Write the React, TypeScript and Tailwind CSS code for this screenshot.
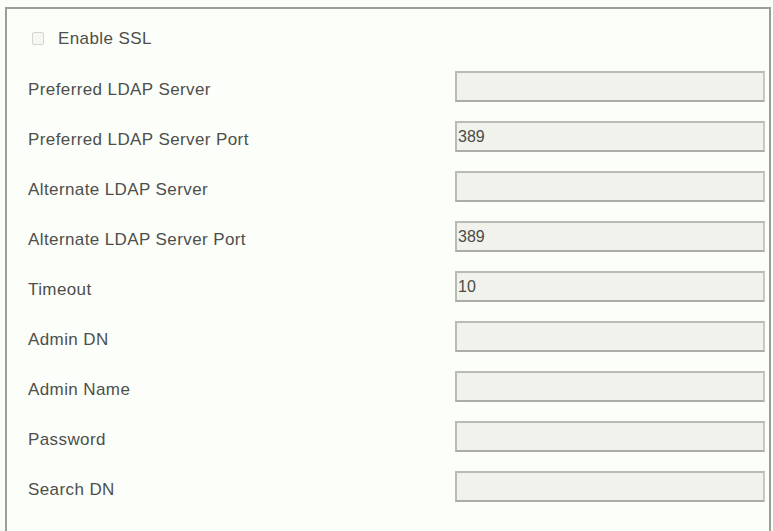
const rows: { label: string; value: string }[] = [
  { label: "Preferred LDAP Server", value: "" },
  { label: "Preferred LDAP Server Port", value: "389" },
  { label: "Alternate LDAP Server", value: "" },
  { label: "Alternate LDAP Server Port", value: "389" },
  { label: "Timeout", value: "10" },
  { label: "Admin DN", value: "" },
  { label: "Admin Name", value: "" },
  { label: "Password", value: "" },
  { label: "Search DN", value: "" },
];

export default function App() {
  return (
    <div
      className="w-[773px] h-[531px] overflow-hidden bg-[#fbfdf8] pt-[7px] pl-[5px] pr-[2px] text-[#4d4f4b] text-[17px] tracking-[0.4px]"
      style={{ fontFamily: '"Liberation Sans", Arial, sans-serif' }}
    >
      <div className="h-[540px] border-2 border-b-0 border-[#9c9e9a] bg-[#fcfefa] pt-[12px] pl-[21px] pr-[4px] flex flex-col gap-[19px]">
        {/* ssl checkbox */}
        <label className="h-[31px] flex items-center pl-[4px] gap-[14px]">
          <span className="w-[12px] h-[13px] mt-[3px] rounded-[2px] border border-[#d3d5d0] bg-[#f6f7f3]" />
          <span className="pt-[4px]">Enable SSL</span>
        </label>

        {rows.map((r) => (
          <div key={r.label} className="h-[31px] flex items-center justify-between">
            <span className="pt-[6px]">{r.label}</span>
            <div className="w-[310px] h-[31px] border-2 border-[#b9bbb4] border-r-[#c6c8c1] border-b-[#abada6] bg-[#f1f2eb] flex items-center pl-[1px] text-[16px] tracking-normal text-[#4a4c48]">
              {r.value}
            </div>
          </div>
        ))}
      </div>
    </div>
  );
}
